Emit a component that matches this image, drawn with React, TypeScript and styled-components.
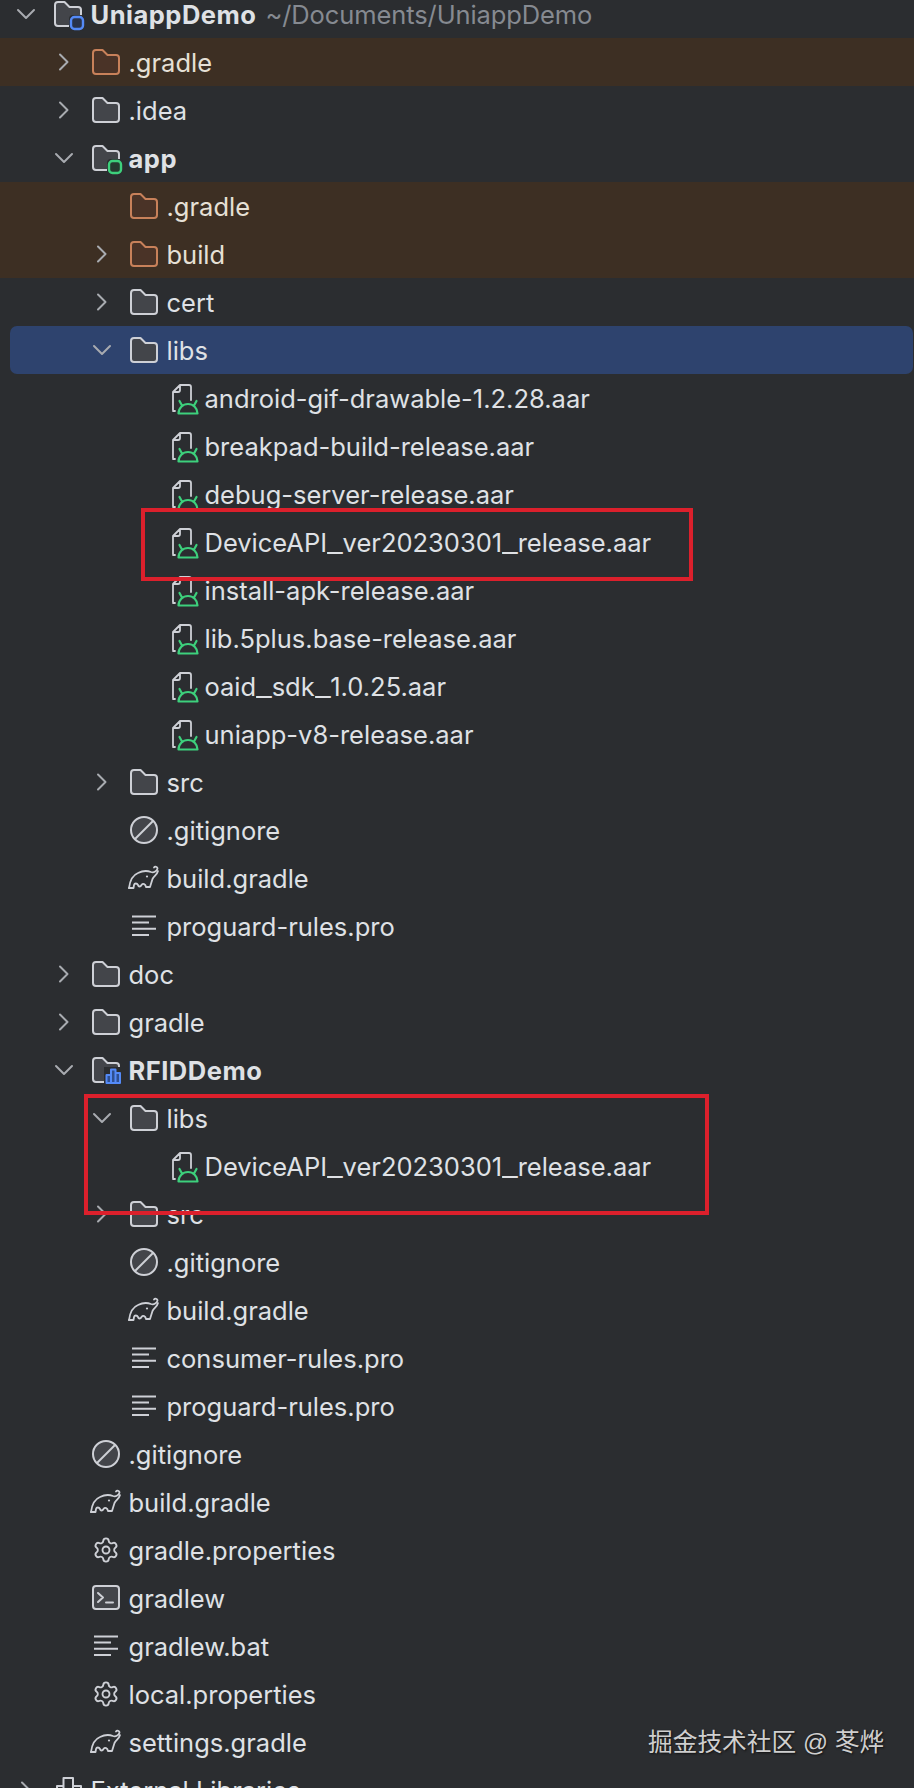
import React from 'react';
import styled, { createGlobalStyle } from 'styled-components';
import { Settings } from 'lucide-react';

const GlobalStyle = createGlobalStyle`
  html, body {
    margin: 0;
    padding: 0;
    height: 1788px;
    overflow: hidden;
    background: #2b2d30;
  }
`;

const Page = styled.div`
  position: relative;
  width: 914px;
  height: 1788px;
  overflow: hidden;
  background: #2b2d30;
  color: #dfe1e5;
  font-family: Inter, "Noto Sans", sans-serif;
  font-size: 25.5px;
`;

const Tree = styled.div`
  display: flex;
  flex-direction: column;
  margin-top: -10px;
`;

const Row = styled.div<{ $level: number; $ignored?: boolean; $selected?: boolean }>`
  display: flex;
  align-items: center;
  flex: none;
  box-sizing: border-box;
  height: 48px;
  padding-left: ${p => 16 + p.$level * 38 - (p.$selected ? 10 : 0)}px;
  margin: ${p => (p.$selected ? '0 1px 0 10px' : '0')};
  border-radius: ${p => (p.$selected ? '7px' : '0')};
  background: ${p => (p.$selected ? '#2e436e' : p.$ignored ? '#3d2f23' : 'transparent')};
  color: ${p => (p.$ignored ? '#e6e0d6' : '#dfe1e5')};
`;

const Arrow = styled.svg`
  flex: none;
  width: 20px;
  height: 20px;
  margin-right: 18px;
  fill: none;
  stroke: #a8abb0;
  stroke-width: 2;
  stroke-linecap: round;
  stroke-linejoin: round;
`;

const ArrowGap = styled.span`
  flex: none;
  width: 38px;
`;

const IconSvg = styled.svg`
  flex: none;
  width: 28px;
  height: 28px;
  margin-right: 8.5px;
  overflow: visible;
  fill: none;
  stroke: #ced0d6;
  stroke-width: 2;
  stroke-linecap: round;
  stroke-linejoin: round;
`;

const GearIcon = styled(Settings)`
  flex: none;
  margin-right: 8.5px;
  color: #ced0d6;
`;

const Name = styled.span<{ $bold?: boolean }>`
  font-weight: ${p => (p.$bold ? 700 : 400)};
  letter-spacing: ${p => (p.$bold ? '0.5px' : '0')};
  white-space: nowrap;
`;

// the IDE font draws a longer underscore than Inter does
const Underscore = styled.span`
  display: inline-block;
  width: 15.5px;
  transform: scaleX(1.36);
  transform-origin: left center;
`;

const Hint = styled.span`
  margin-left: 9px;
  color: #868a91;
  letter-spacing: -0.1px;
  white-space: nowrap;
`;

const Marker = styled.div<{ $x: number; $y: number; $w: number; $h: number }>`
  position: absolute;
  box-sizing: border-box;
  left: ${p => p.$x}px;
  top: ${p => p.$y}px;
  width: ${p => p.$w}px;
  height: ${p => p.$h}px;
  border: 4px solid #dc202c;
`;

const Watermark = styled.div`
  position: absolute;
  left: 648px;
  top: 1728px;
  color: #cfcfcf;
  font-family: "Liberation Sans", "Noto Sans CJK SC", sans-serif;
  font-size: 24.7px;
  line-height: 30px;
  white-space: nowrap;
  text-shadow: 1px 1px 2px #111;
`;

const FOLDER = 'M1 5a3 3 0 0 1 3-3h6.5l5 5H24a3 3 0 0 1 3 3v13a3 3 0 0 1-3 3H4a3 3 0 0 1-3-3z';

const Folder = ({ orange }: { orange?: boolean }) => (
  <IconSvg viewBox="0 0 28 28">
    <path d={FOLDER} fill={orange ? '#4a3327' : '#43454a'} stroke={orange ? '#c8815a' : '#ced0d6'} />
  </IconSvg>
);

const ModuleFolder = ({ badge }: { badge: 'blue' | 'green' | 'chart' }) => (
  <IconSvg viewBox="0 0 28 28">
    <path d={FOLDER} fill="#43454a" />
    {badge === 'chart' ? (
      <>
        <rect x="12" y="11" width="18" height="18" fill="#2b2d30" stroke="none" />
        <path
          d="M14.500 27v-8h4.500v8zM19 27V13.500h4.500V27zM23.500 27v-10h4.500v10z"
          fill="#2f4f8f"
          stroke="#548af7"
        />
      </>
    ) : (
      <>
        <rect x="15" y="15" width="16" height="16" rx="4" fill="#2b2d30" stroke="none" />
        <rect
          x="17"
          y="17"
          width="12"
          height="12"
          rx="3.5"
          strokeWidth="2.4"
          fill={badge === 'green' ? '#25392f' : '#29334a'}
          stroke={badge === 'green' ? '#3dd07c' : '#548af7'}
        />
      </>
    )}
  </IconSvg>
);

const AndroidFile = () => (
  <IconSvg viewBox="0 0 28 28">
    <path d="M5 26V8l7-7h9a2 2 0 0 1 2 2v13M5 27h2M12 1v5a2 2 0 0 1-2 2H5" strokeWidth="1.8" />
    <path d="M10.500 29.500a9.500 9.500 0 0 1 19 0zM14 21.500l-2.500-4.500M26 21.500l2.500-4.500" stroke="#3dd07c" strokeWidth="2.2" />
  </IconSvg>
);

const Ignore = () => (
  <IconSvg viewBox="0 0 28 28">
    <circle cx="14" cy="14" r="13" fill="#43454a" />
    <path d="M5 23L23 5" />
  </IconSvg>
);

const Gradle = () => (
  <IconSvg viewBox="0 0 28 28">
    <path
      d="M-1 24C0 16 3 11 8 9c4-2 9-2.500 13-1 3 1 6-1 6.500-3.500.2-1.700-2.500-2.500-3.500-1"
      strokeWidth="1.8"
    />
    <path
      d="M28 7c-1 4-4 5-5.500 8L20 23h-4c-.5-3-3-4-4.500-2-1 2-3 2-3.500 0-1-2-3.500-2-4 0l-.500 3H-1"
      strokeWidth="1.8"
    />
    <circle cx="17" cy="12.500" r="1.100" fill="#ced0d6" stroke="none" />
  </IconSvg>
);

const TextLines = () => (
  <IconSvg viewBox="0 0 28 28">
    <path d="M2 4.500h24M2 10.500h17M2 16.800h24M2 23h17" strokeLinecap="butt" />
  </IconSvg>
);

const Terminal = () => (
  <IconSvg viewBox="0 0 28 28">
    <rect x="1" y="2" width="26" height="23" rx="3" fill="#43454a" />
    <path d="M6 9l5 4.500-5 4.500M14 18.500h7" />
  </IconSvg>
);

const Libraries = () => (
  <IconSvg viewBox="0 0 28 28">
    <path d="M3 27V10h6.500V2h9.500v8h8v17M9.500 10v17M19 10v17" />
  </IconSvg>
);

const Gear = () => <GearIcon size={28} strokeWidth={1.6} />;

type Item = {
  name: string;
  level: number;
  icon: React.ReactNode;
  arrow?: 'open' | 'closed';
  bold?: boolean;
  hint?: string;
  ignored?: boolean;
  selected?: boolean;
};

const rows: Item[] = [
  { name: 'UniappDemo', level: 0, arrow: 'open', bold: true, hint: '~/Documents/UniappDemo', icon: <ModuleFolder badge="blue" /> },
  { name: '.gradle', level: 1, arrow: 'closed', ignored: true, icon: <Folder orange /> },
  { name: '.idea', level: 1, arrow: 'closed', icon: <Folder /> },
  { name: 'app', level: 1, arrow: 'open', bold: true, icon: <ModuleFolder badge="green" /> },
  { name: '.gradle', level: 2, ignored: true, icon: <Folder orange /> },
  { name: 'build', level: 2, arrow: 'closed', ignored: true, icon: <Folder orange /> },
  { name: 'cert', level: 2, arrow: 'closed', icon: <Folder /> },
  { name: 'libs', level: 2, arrow: 'open', selected: true, icon: <Folder /> },
  { name: 'android-gif-drawable-1.2.28.aar', level: 3, icon: <AndroidFile /> },
  { name: 'breakpad-build-release.aar', level: 3, icon: <AndroidFile /> },
  { name: 'debug-server-release.aar', level: 3, icon: <AndroidFile /> },
  { name: 'DeviceAPI_ver20230301_release.aar', level: 3, icon: <AndroidFile /> },
  { name: 'install-apk-release.aar', level: 3, icon: <AndroidFile /> },
  { name: 'lib.5plus.base-release.aar', level: 3, icon: <AndroidFile /> },
  { name: 'oaid_sdk_1.0.25.aar', level: 3, icon: <AndroidFile /> },
  { name: 'uniapp-v8-release.aar', level: 3, icon: <AndroidFile /> },
  { name: 'src', level: 2, arrow: 'closed', icon: <Folder /> },
  { name: '.gitignore', level: 2, icon: <Ignore /> },
  { name: 'build.gradle', level: 2, icon: <Gradle /> },
  { name: 'proguard-rules.pro', level: 2, icon: <TextLines /> },
  { name: 'doc', level: 1, arrow: 'closed', icon: <Folder /> },
  { name: 'gradle', level: 1, arrow: 'closed', icon: <Folder /> },
  { name: 'RFIDDemo', level: 1, arrow: 'open', bold: true, icon: <ModuleFolder badge="chart" /> },
  { name: 'libs', level: 2, arrow: 'open', icon: <Folder /> },
  { name: 'DeviceAPI_ver20230301_release.aar', level: 3, icon: <AndroidFile /> },
  { name: 'src', level: 2, arrow: 'closed', icon: <Folder /> },
  { name: '.gitignore', level: 2, icon: <Ignore /> },
  { name: 'build.gradle', level: 2, icon: <Gradle /> },
  { name: 'consumer-rules.pro', level: 2, icon: <TextLines /> },
  { name: 'proguard-rules.pro', level: 2, icon: <TextLines /> },
  { name: '.gitignore', level: 1, icon: <Ignore /> },
  { name: 'build.gradle', level: 1, icon: <Gradle /> },
  { name: 'gradle.properties', level: 1, icon: <Gear /> },
  { name: 'gradlew', level: 1, icon: <Terminal /> },
  { name: 'gradlew.bat', level: 1, icon: <TextLines /> },
  { name: 'local.properties', level: 1, icon: <Gear /> },
  { name: 'settings.gradle', level: 1, icon: <Gradle /> },
  { name: 'External Libraries', level: 0, arrow: 'closed', icon: <Libraries /> },
];

const renderName = (name: string) =>
  name.split('_').map((part, i) => (
    <React.Fragment key={i}>
      {i > 0 && <Underscore>_</Underscore>}
      {part}
    </React.Fragment>
  ));

const App = () => (
  <Page>
    <GlobalStyle />
    <Tree>
      {rows.map((row, i) => (
        <Row key={i} $level={row.level} $ignored={row.ignored} $selected={row.selected}>
          {row.arrow ? (
            <Arrow viewBox="0 0 20 20">
              <path d={row.arrow === 'open' ? 'M2 6l8 8 8-8' : 'M6 2.500l7.500 7.500-7.500 7.500'} />
            </Arrow>
          ) : (
            <ArrowGap />
          )}
          {row.icon}
          <Name $bold={row.bold}>{renderName(row.name)}</Name>
          {row.hint && <Hint>{row.hint}</Hint>}
        </Row>
      ))}
    </Tree>
    <Marker $x={141} $y={508} $w={552} $h={73} />
    <Marker $x={84} $y={1094} $w={625} $h={121} />
    <Watermark>掘金技术社区 @ 苳烨</Watermark>
  </Page>
);

export default App;
